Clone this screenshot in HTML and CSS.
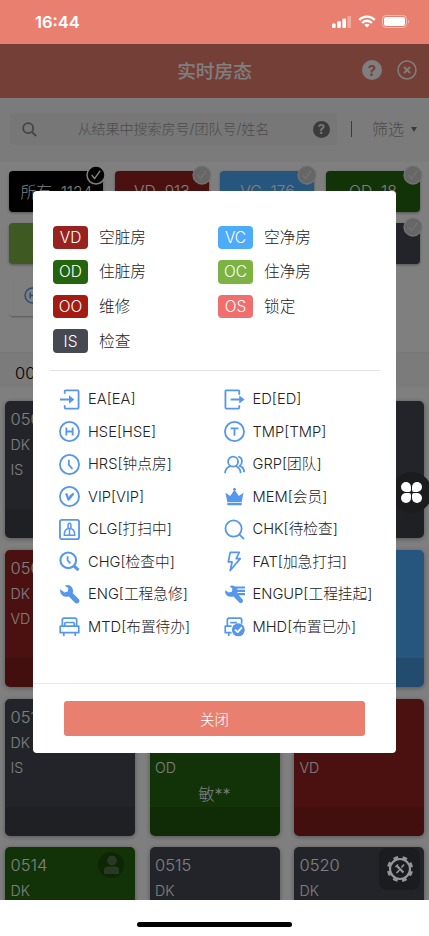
FILE: index.html
```html
<!DOCTYPE html>
<html lang="zh-CN">
<head>
<meta charset="utf-8">
<title>实时房态</title>
<link rel="stylesheet" href="styles.css">
</head>
<body>
<div class="phone">
  <div class="status-bar">
    <span class="time">16:44</span>
    <span class="signals">
      <svg width="20" height="12" viewBox="0 0 20 12" fill="#fff"><rect x="0" y="7.5" width="3.6" height="4.5" rx="1"/><rect x="5.2" y="5.2" width="3.6" height="6.8" rx="1"/><rect x="10.4" y="2.5" width="3.6" height="9.5" rx="1"/><rect x="15.4" y="0" width="3.6" height="12" rx="1" opacity=".35"/></svg>
      <svg width="18" height="13" viewBox="0 0 18 13" fill="none" stroke="#fff" stroke-width="2.3"><path d="M1.2 5C5.4.5 12.6.5 16.8 5M4.1 8C6.8 5 11.2 5 13.9 8"/><path d="M9 12.6 6.4 9.9Q9 7.8 11.6 9.9z" fill="#fff" stroke="none"/></svg>
      <svg width="28" height="13" viewBox="0 0 28 13"><rect x=".5" y=".5" width="24" height="12" rx="3.6" fill="none" stroke="#fff" opacity=".5"/><rect x="2" y="2" width="21" height="9" rx="2.2" fill="#fff"/><path d="M26 4.4q1.6 2.1 0 4.2z" fill="#fff" opacity=".6"/></svg>
    </span>
  </div>

  <main class="app">
    <header class="nav">
      <h1>实时房态</h1>
      <div class="nav-icons">
        <span class="help big">?</span>
        <svg width="20" height="20" viewBox="0 0 20 20" fill="none" stroke="#fff" stroke-width="1.5"><circle cx="10" cy="10" r="9"/><path d="m7 7 6 6m0-6-6 6" stroke-width="1.8"/></svg>
      </div>
    </header>
    <div class="search-row">
      <div class="search">
        <svg width="15" height="15" viewBox="0 0 15 15" fill="none" stroke="#888" stroke-width="1.8"><circle cx="6.2" cy="6.2" r="5"/><path d="m10 10 4.2 4.2"/></svg>
        <span class="placeholder">从结果中搜索房号/团队号/姓名</span>
        <span class="help small">?</span>
      </div>
      <span class="bar"></span>
      <span class="filter">筛选</span>
      <span class="caret"></span>
    </div>
    <div class="chips">
      <div class="chip black">所有&nbsp; 1124<svg class="tick on" viewBox="0 0 20 20"><circle cx="10" cy="10" r="9"/><path d="m5.6 10 3 3.6 5.6-8"/></svg></div>
      <div class="chip red">VD&nbsp; 913<svg class="tick" viewBox="0 0 20 20"><circle cx="10" cy="10" r="9"/><path d="m5.6 10 3 3.6 5.6-8"/></svg></div>
      <div class="chip blue">VC&nbsp; 176<svg class="tick" viewBox="0 0 20 20"><circle cx="10" cy="10" r="9"/><path d="m5.6 10 3 3.6 5.6-8"/></svg></div>
      <div class="chip green">OD&nbsp; 18<svg class="tick" viewBox="0 0 20 20"><circle cx="10" cy="10" r="9"/><path d="m5.6 10 3 3.6 5.6-8"/></svg></div>
      <div class="chip lime"></div>
      <div class="chip red"></div>
      <div class="chip red"></div>
      <div class="chip slate"><svg class="tick" viewBox="0 0 20 20"><circle cx="10" cy="10" r="9"/><path d="m5.6 10 3 3.6 5.6-8"/></svg></div>
      <div class="chip plain"><svg class="line-icon" width="17" height="17" viewBox="0 0 22 22"><circle cx="11" cy="11" r="9.6"/><path d="M8 7v8m6-8v8m-6-4h6"/></svg></div>
    </div>
    <div class="floor">00</div>
    <div class="rooms">
      <div class="room slate"><b>0501</b><span>DK</span><span>IS</span></div>
      <div class="room slate"></div>
      <div class="room slate"></div>
      <div class="room red"><b>0506</b><span>DK</span><span>VD</span></div>
      <div class="room red"></div>
      <div class="room blue"></div>
      <div class="room slate"><b>0511</b><span>DK</span><span>IS</span></div>
      <div class="room green"><b>0512</b><span>DK</span><span>OD</span><em>敏**</em></div>
      <div class="room red"><b>0513</b><span>DK</span><span>VD</span></div>
      <div class="room green"><b>0514</b><span>DK</span>
        <svg class="guest" width="26" height="26" viewBox="0 0 26 26"><circle cx="13" cy="13" r="13" fill="#1f4d0c"/><g fill="#537548"><circle cx="14" cy="8.5" r="4.8"/><path d="M6 22v-3.5q0-4 4-4h7q4 0 4 4V22z"/></g></svg></div>
      <div class="room slate"><b>0515</b><span>DK</span></div>
      <div class="room slate"><b>0520</b><span>DK</span></div>
    </div>
    <div class="overlay"></div>
    <div class="tools">
      <svg width="28" height="28" viewBox="0 0 28 28" fill="none" stroke="#969698"><circle cx="14" cy="14" r="11.6" stroke-width="3" stroke-dasharray="4.6 4.51" stroke-dashoffset="-2.25"/><circle cx="14" cy="14" r="10" stroke-width="2.2"/><path d="m10.500 10.500 7 7" stroke-width="2.200"/><path d="m18 9.500-2.500 3m-2 2.500-3 3" stroke-width="1.600"/><path d="m9.500 12 2.500-2.500" stroke-width="1.500"/></svg>
    </div>
    <div class="float">
      <i></i><i></i><i></i><i></i>
    </div>

    <section class="modal">
      <div class="states">
        <div><span class="badge red">VD</span><span class="name">空脏房</span></div>
        <div><span class="badge blue">VC</span><span class="name">空净房</span></div>
        <div><span class="badge green">OD</span><span class="name">住脏房</span></div>
        <div><span class="badge lime">OC</span><span class="name">住净房</span></div>
        <div><span class="badge crimson">OO</span><span class="name">维修</span></div>
        <div><span class="badge pink">OS</span><span class="name">锁定</span></div>
        <div><span class="badge slate">IS</span><span class="name">检查</span></div>
      </div>
      <div class="legend">
        <div><svg class="line-icon" viewBox="0 0 22 22"><path d="M6 5V2.500q0-1 1-1h12.500q1 0 1 1v17q0 1-1 1H7q-1 0-1-1V17M1 11h12"/><path class="fill" d="m10.500 6.500 5.500 4.500-5.500 4.500z"/></svg>EA[EA]</div>
        <div><svg class="line-icon" viewBox="0 0 22 22"><path d="M16 6V2.500q0-1-1-1H2.500q-1 0-1 1v17q0 1 1 1H15q1 0 1-1V17M7 11h11"/><path class="fill" d="m16 6.800 5.500 4.200-5.500 4.200z"/></svg>ED[ED]</div>
        <div><svg class="line-icon" viewBox="0 0 22 22"><circle cx="11" cy="11" r="10"/><path d="M7.700 6.800v8.400m6.600-8.400v8.400m-6.600-4.200h6.600"/></svg>HSE[HSE]</div>
        <div><svg class="line-icon" viewBox="0 0 22 22"><circle cx="11" cy="11" r="10"/><path d="M6.800 7.800h8.400M11 7.800v7.700"/></svg>TMP[TMP]</div>
        <div><svg class="line-icon" viewBox="0 0 22 22"><circle cx="11" cy="11" r="10"/><path d="M10.300 6v5.500l3.800 4"/></svg>HRS[钟点房]</div>
        <div><svg class="line-icon" viewBox="0 0 22 22"><circle cx="9.500" cy="8" r="5.200"/><path d="M1 20q.5-6 6-7.300M12 12.700q5 1.300 5.500 7.300M15 2.800q3.800 1 3.800 5 0 3-2.500 4.700 4.700 1.500 4.700 6.500"/></svg>GRP[团队]</div>
        <div><svg class="line-icon" viewBox="0 0 22 22"><circle cx="11" cy="11" r="10"/><path d="m7.500 7.800 2.500 6.500 5-6.500" stroke-width="2.400"/><path class="fill" d="m11 10 5-3.500-6 9z"/></svg>VIP[VIP]</div>
        <div><svg class="line-icon" viewBox="0 0 22 22"><path class="fill" d="m1.500 7 5 3.500L11 4l4.500 6.500 5-3.500-2 9.800h-15zM3.500 16h15v4.200h-15z"/><path d="M3.500 17.300h15" style="stroke:#fff;stroke-width:.8"/><circle class="fill" cx="11" cy="3.500" r="1.500"/></svg>MEM[会员]</div>
        <div><svg class="line-icon" viewBox="0 0 22 22"><rect x="1" y="1" width="20" height="20" rx="2"/><path d="M9.500 9.500V6q0-1.500 1.500-1.500t1.500 1.500v3.500M5.500 17q0-7 5.500-7t5.500 7zM11 11v6M5.500 17h11" stroke-width="1.600"/></svg>CLG[打扫中]</div>
        <div><svg class="line-icon" viewBox="0 0 22 22"><circle cx="10" cy="10" r="8.500"/><path d="m16 16 5 5"/></svg>CHK[待检查]</div>
        <div><svg class="line-icon" viewBox="0 0 22 22"><circle cx="9.700" cy="9.700" r="8.200" stroke-width="2.200"/><path d="M9 5.500v4.200l2.800 3.200"/><path d="m15.500 15.500 5 4.500" stroke-width="3.200"/></svg>CHG[检查中]</div>
        <div><svg class="line-icon" viewBox="0 0 22 22"><path d="M6.500 1.500H16L12.800 8H17L6.500 20.500l2-9H4.500z" stroke-width="1.800"/></svg>FAT[加急打扫]</div>
        <div><svg class="line-icon" viewBox="0 0 22 22"><path class="fill" d="M6 1.500q5-1.500 7.500 2 2 3 .8 6l6.500 6.500q1.300 2-.3 3.700-1.900 1.600-3.800 0L10.300 13q-4 1.300-7-1.300Q.5 9.200 1.300 5.500l4.500 3.300 3.500-1 .5-3.300z"/></svg>ENG[工程急修]</div>
        <div><svg class="line-icon" viewBox="0 0 22 22"><path class="fill" d="M6 2q3-1 5.500.500H22v2.300h-8V6h8v2.300h-8V9.500h8v2.300h-6.500l4 4.500q1 1.500-.3 3-1.700 1.300-3.200 0L10 13q-4 1.300-7-1-2.600-2.500-1.800-5.500L5 9l3.300-1 .5-3z"/></svg>ENGUP[工程挂起]</div>
        <div><svg class="line-icon" viewBox="0 0 22 22"><path d="M3.500 10V4q0-1.800 1.800-1.800h11.400q1.800 0 1.800 1.800v6M6 10V8q0-1.200 1.200-1.200h7.600Q16 6.800 16 8v2M1.300 10.500h19.400V17.500H1.300zM5 17v4M17 17v4" stroke-width="1.800"/></svg>MTD[布置待办]</div>
        <div><svg class="line-icon" viewBox="0 0 22 22"><path d="M3.500 10V4q0-1.800 1.800-1.800h11.400q1.800 0 1.800 1.800v4M6.500 7h7M8 10.500H1.300V17.500H8M5 17v4" stroke-width="1.800"/><circle class="fill" cx="15" cy="14.500" r="6.800"/><path d="m11.500 14.200 2.800 2.700 4.400-5" style="stroke:#fff"/></svg>MHD[布置已办]</div>
      </div>
      <footer><button>关闭</button></footer>
    </section>
  </main>
  <div class="home"><i></i></div>
</div>
</body>
</html>
```
FILE: styles.css
```css
* { box-sizing: border-box; }
body {
  margin: 0;
  font-family: Inter, "Noto Sans CJK SC", sans-serif;
  font-weight: 300;
  background: #fff;
}
.phone { width: 429px; height: 936px; overflow: hidden; display: flex; flex-direction: column; }
.status-bar {
  height: 44px; flex: none; background: #e97f6f; color: #fff;
  display: flex; justify-content: space-between; align-items: center;
  padding: 0 19px 0 35px;
}
.time { font-size: 16.5px; font-weight: 600; }
.signals { display: flex; align-items: center; gap: 6px; padding-bottom: 1px; }
.app { position: relative; height: 856px; flex: none; overflow: hidden; background: #fff; }
.nav {
  height: 54px; background: #e97f6f; color: #fff; padding: 0 12px;
  display: grid; grid-template-columns: 1fr auto 1fr; align-items: center;
}
.nav h1 { grid-column: 2; margin: 0; font-size: 18.7px; font-weight: 500; line-height: 52px; padding-top: 2px; }
.nav-icons { display: flex; justify-content: flex-end; align-items: center; gap: 15px; padding-bottom: 2px; }
.help {
  display: flex; align-items: center; justify-content: center;
  border-radius: 50%; font-weight: 700;
}
.big { width: 20px; height: 20px; background: #fff; color: #e97f6f; font-size: 15px; }
.small { width: 17px; height: 17px; background: #777; color: #eee; font-size: 13px; }
.search-row {
  height: 64px; background: #f7f7f7; padding: 0 10px 2px; color: #999;
  display: flex; align-items: center;
}
.search {
  width: 327px; height: 32px; border-radius: 4px; background: #eee;
  display: flex; align-items: center; padding: 0 7px 0 12px;
}
.placeholder { flex: 1; text-align: center; font-size: 14px; color: #999; padding: 0 3px 2px 0; }
.bar { width: 1px; height: 16px; background: #777; margin: 0 20px 0 14px; }
.filter { font-size: 16px; padding-bottom: 2px; }
.caret { border: 3.5px solid transparent; border-top: 5px solid #777; border-bottom: 0; margin-left: 7px; }
.chips {
  display: grid; grid-template-columns: repeat(4, 94px); grid-auto-rows: 41px;
  gap: 11px 11.5px; padding: 9px 9.4px 0; height: 190px;
}
.chip {
  position: relative; border-radius: 4px; color: #fff; font-size: 15.7px; padding-bottom: 1px;
  display: flex; align-items: center; justify-content: center;
  box-shadow: 0 1px 3px rgba(0, 0, 0, .35); white-space: nowrap;
}
.tick { position: absolute; width: 20px; height: 20px; right: -3px; top: -6px; fill: #ccc; stroke: #e6e6e6; stroke-width: 1.3; }
.tick.on { fill: #000; stroke: #fff; stroke-width: 1.5; }
.black { background: #000; }
.red { background: #962320; }
.blue { background: #4dabfa; }
.green { background: #24640f; }
.lime { background: #7cb342; }
.slate { background: #464952; }
.crimson { background: #a21c14; }
.pink { background: #f06e6e; }
.plain { background: #fff; justify-content: flex-start; padding-left: 15px; padding-bottom: 0; box-shadow: 0 2px 2px -1px rgba(0, 0, 0, .35); }
.floor {
  height: 35px; line-height: 41px; padding-left: 15px; margin-bottom: 14px; font-size: 16.5px;
  background: #f7f7f7; border-top: 1px solid #eee; color: #000;
}
.rooms {
  display: grid; grid-template-columns: repeat(3, 130px); grid-auto-rows: 137px;
  gap: 11.8px 14.5px; padding: 0 5px;
}
.room {
  position: relative; border-radius: 5px; color: #fff; padding: 6px 5.5px;
  display: flex; flex-direction: column;
  background-image: linear-gradient(transparent 108px, rgba(0, 0, 0, .12) 108px);
  box-shadow: 0 1px 5px rgba(0, 0, 0, .35);
}
.room b { font-size: 16.5px; line-height: 24px; font-weight: 300; margin-bottom: 1px; }
.room span { font-size: 14.2px; line-height: 25px; }
.room em { font-style: normal; font-size: 16px; line-height: 28px; text-align: center; }
.guest { position: absolute; right: 11px; top: 5px; }
.overlay { position: absolute; inset: 0; background: rgba(0, 0, 0, .5); }
.tools {
  position: absolute; left: 379px; top: 804px; width: 41px; height: 42px; border-radius: 8px;
  background: #1b1c1f; display: flex; align-items: center; justify-content: center;
}
.float {
  position: absolute; left: 391px; top: 428px; width: 41px; height: 41px; border-radius: 50%;
  background: #1c1c1e; display: grid; grid-template-columns: 10px 10px; grid-auto-rows: 10px;
  gap: 1px; place-content: center; padding-right: 1px;
}
.float i { background: #fff; border-radius: 50%; }
.float i:nth-child(1) { border-bottom-right-radius: 2px; }
.float i:nth-child(2) { border-bottom-left-radius: 2px; }
.float i:nth-child(3) { border-top-right-radius: 2px; }
.float i:nth-child(4) { border-top-left-radius: 2px; }
.modal {
  position: absolute; left: 33px; top: 147px; width: 363px; height: 562px;
  border-radius: 4px; background: #fff; color: #222;
  display: flex; flex-direction: column;
}
.states {
  margin: 0 16px 0 17px; padding: 29px 0 0 3px; height: 180px; border-bottom: 1px solid #e2e2e2;
  display: grid; grid-template-columns: 165px 1fr; grid-auto-rows: 34.6px; font-size: 15.7px;
}
.states > div { display: flex; align-items: center; gap: 11px; white-space: nowrap; }
.name { padding-bottom: 2px; }
.badge {
  width: 35px; height: 23.5px; border-radius: 4px; color: #fff; font-size: 15.5px;
  display: flex; align-items: center; justify-content: center;
}
.legend {
  flex: 1; padding: 12px 0 0 26px; font-size: 14.7px; line-height: 22px;
  display: grid; grid-template-columns: 164.5px 1fr; grid-auto-rows: 32.5px;
}
.legend > div { display: flex; align-items: center; gap: 8px; white-space: nowrap; }
.legend svg { width: 21px; height: 21px; flex: none; }
.line-icon { fill: none; stroke: #5597ed; stroke-width: 1.9; stroke-linejoin: round; }
.fill { fill: #5597ed; stroke: none; }
.modal footer { height: 70px; border-top: 1px solid #e6e6e6; padding: 17px 31px; }
.modal button {
  width: 100%; height: 35px; border: 0; border-radius: 3px; background: #e97f6f; color: #fff;
  font: inherit; font-size: 14.5px; display: flex; align-items: center; justify-content: center;
}
.home { flex: 1; display: flex; justify-content: center; align-items: flex-start; padding-top: 22px; }
.home i { width: 155px; height: 5px; border-radius: 3px; background: #000; }
```
